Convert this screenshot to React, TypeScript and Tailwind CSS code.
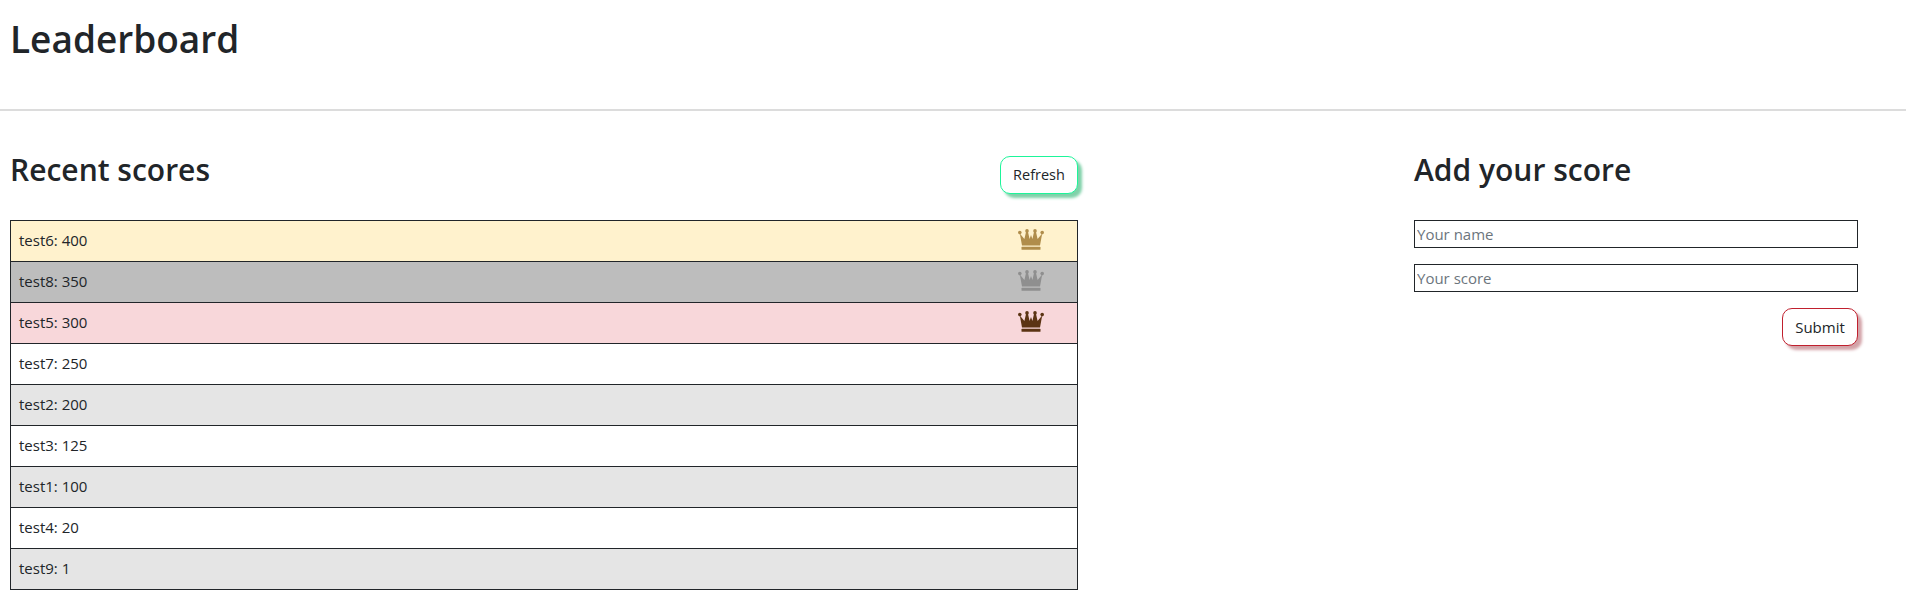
import React from 'react';

const scores = [
  { name: 'test6', score: 400, bg: 'bg-[#fff2cd]', crown: '#b08d4b' },
  { name: 'test8', score: 350, bg: 'bg-[#bdbdbd]', crown: '#8f8f8f' },
  { name: 'test5', score: 300, bg: 'bg-[#f8d7da]', crown: '#5b3413' },
  { name: 'test7', score: 250, bg: 'bg-white' },
  { name: 'test2', score: 200, bg: 'bg-[#e5e5e5]' },
  { name: 'test3', score: 125, bg: 'bg-white' },
  { name: 'test1', score: 100, bg: 'bg-[#e5e5e5]' },
  { name: 'test4', score: 20, bg: 'bg-white' },
  { name: 'test9', score: 1, bg: 'bg-[#e5e5e5]' },
];

function Crown({ color }: { color: string }) {
  return (
    <svg width="26" height="21" viewBox="0 0 26 21" fill={color} className="mb-[3px]">
      <circle cx="1.8" cy="3.6" r="1.8" />
      <circle cx="9" cy="1.9" r="1.8" />
      <circle cx="17" cy="1.9" r="1.8" />
      <circle cx="24.2" cy="3.6" r="1.8" />
      <path d="M1.8 4.5 L6.4 10 L8 3 L10 3 L11.6 10 L13 6 L14.4 10 L16 3 L18 3 L19.6 10 L24.2 4.5 L22 16.5 L4 16.5 Z" />
      <rect x="3.5" y="17.8" width="19" height="3" rx="0.6" />
    </svg>
  );
}

export default function App() {
  return (
    <div className="min-h-[613px] bg-white text-[#212529] font-['Open_Sans','Noto_Sans',sans-serif]">
      <div className="h-[111px] border-b-2 border-[#dcdcdc] px-[10px] pt-[13px]">
        <h1 className="text-[37px] leading-[52px] font-semibold">Leaderboard</h1>
      </div>

      <div className="flex items-start px-[10px] pt-[42px]">
        <div className="w-[1068px]">
          <div className="flex items-start justify-between h-[67px]">
            <h2 className="text-[30px] leading-[44px] font-semibold mt-[-5px]">Recent scores</h2>
            <button className="w-[78px] h-[38px] mt-[3px] rounded-[10px] border border-[#1df59a] bg-white text-[14.5px] shadow-[4px_4px_3px_#7fd1a9]">
              Refresh
            </button>
          </div>
          <ul className="border-t border-[#212529]">
            {scores.map((s) => (
              <li
                key={s.name}
                className={`flex items-center justify-between h-[41px] border border-t-0 border-[#212529] pl-[8px] pr-[33px] text-[15px] ${s.bg}`}
              >
                <span className="mb-[1px]">
                  {s.name}: {s.score}
                </span>
                {s.crown && <Crown color={s.crown} />}
              </li>
            ))}
          </ul>
        </div>

        <div className="w-[444px] ml-[336px]">
          <h2 className="text-[30px] leading-[44px] font-semibold mt-[-5px] mb-[28px]">Add your score</h2>
          <form className="flex flex-col">
            <input
              placeholder="Your name"
              className="h-[28px] border border-[#212529] px-[2px] text-[15px] placeholder:text-[#6c757d] mb-[16px]"
            />
            <input
              placeholder="Your score"
              className="h-[28px] border border-[#212529] px-[2px] text-[15px] placeholder:text-[#6c757d] mb-[16px]"
            />
            <button
              type="button"
              className="self-end w-[76px] h-[38px] rounded-[10px] border border-[#c0202e] bg-white text-[15px] shadow-[4px_4px_3px_#d3a3a8]"
            >
              Submit
            </button>
          </form>
        </div>
      </div>
    </div>
  );
}
